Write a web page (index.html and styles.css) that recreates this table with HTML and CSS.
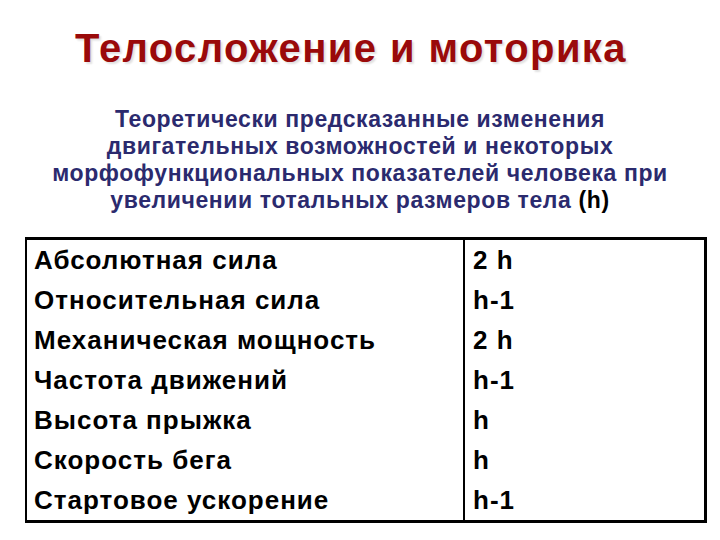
FILE: index.html
```html
<!DOCTYPE html>
<html lang="ru">
<head>
<meta charset="utf-8">
<title>Телосложение и моторика</title>
<link rel="stylesheet" href="styles.css">
</head>
<body>
<div class="slide">
  <h1 class="title">Телосложение и моторика</h1>
  <p class="subtitle">Теоретически предсказанные изменения<br>двигательных возможностей и некоторых<br>морфофункциональных показателей человека при<br>увеличении тотальных размеров тела <span class="h">(h)</span></p>
  <div class="table">
    <div class="col names">
      <div class="cell">Абсолютная сила</div>
      <div class="cell">Относительная сила</div>
      <div class="cell">Механическая мощность</div>
      <div class="cell">Частота движений</div>
      <div class="cell">Высота прыжка</div>
      <div class="cell">Скорость бега</div>
      <div class="cell">Стартовое ускорение</div>
    </div>
    <div class="col values">
      <div class="cell">2 h</div>
      <div class="cell">h-1</div>
      <div class="cell">2 h</div>
      <div class="cell">h-1</div>
      <div class="cell">h</div>
      <div class="cell">h</div>
      <div class="cell">h-1</div>
    </div>
  </div>
</div>
</body>
</html>
```

FILE: styles.css
```css
html, body {
  margin: 0;
  padding: 0;
  background: #ffffff;
}
.slide {
  width: 720px;
  height: 540px;
  font-family: "Liberation Sans", Arial, sans-serif;
  font-weight: bold;
  display: flex;
  flex-direction: column;
  overflow: hidden;
}
.title {
  margin: 28px 18px 0 0;
  font-size: 40px;
  line-height: 40px;
  letter-spacing: 1.4px;
  text-align: center;
  color: #9a0a0a;
  font-weight: bold;
  text-shadow: 2px 2px 2px rgba(0, 0, 0, 0.12);
}
.subtitle {
  margin: 38px 0 0 0;
  font-size: 23px;
  line-height: 27px;
  letter-spacing: 0.6px;
  text-align: center;
  color: #2b2a6e;
}
.subtitle .h {
  color: #000000;
}
.table {
  margin: 23px 0 0 25px;
  width: 682px;
  box-sizing: border-box;
  border: 3px solid #000000;
  border-left-width: 2px;
  display: flex;
  color: #000000;
  font-size: 26px;
  letter-spacing: 1px;
}
.col {
  display: flex;
  flex-direction: column;
}
.names {
  width: 438px;
  border-right: 2px solid #000000;
  padding-left: 7px;
  box-sizing: border-box;
}
.values {
  padding-left: 8px;
}
.cell {
  height: 40px;
  line-height: 40px;
  white-space: nowrap;
}
```
